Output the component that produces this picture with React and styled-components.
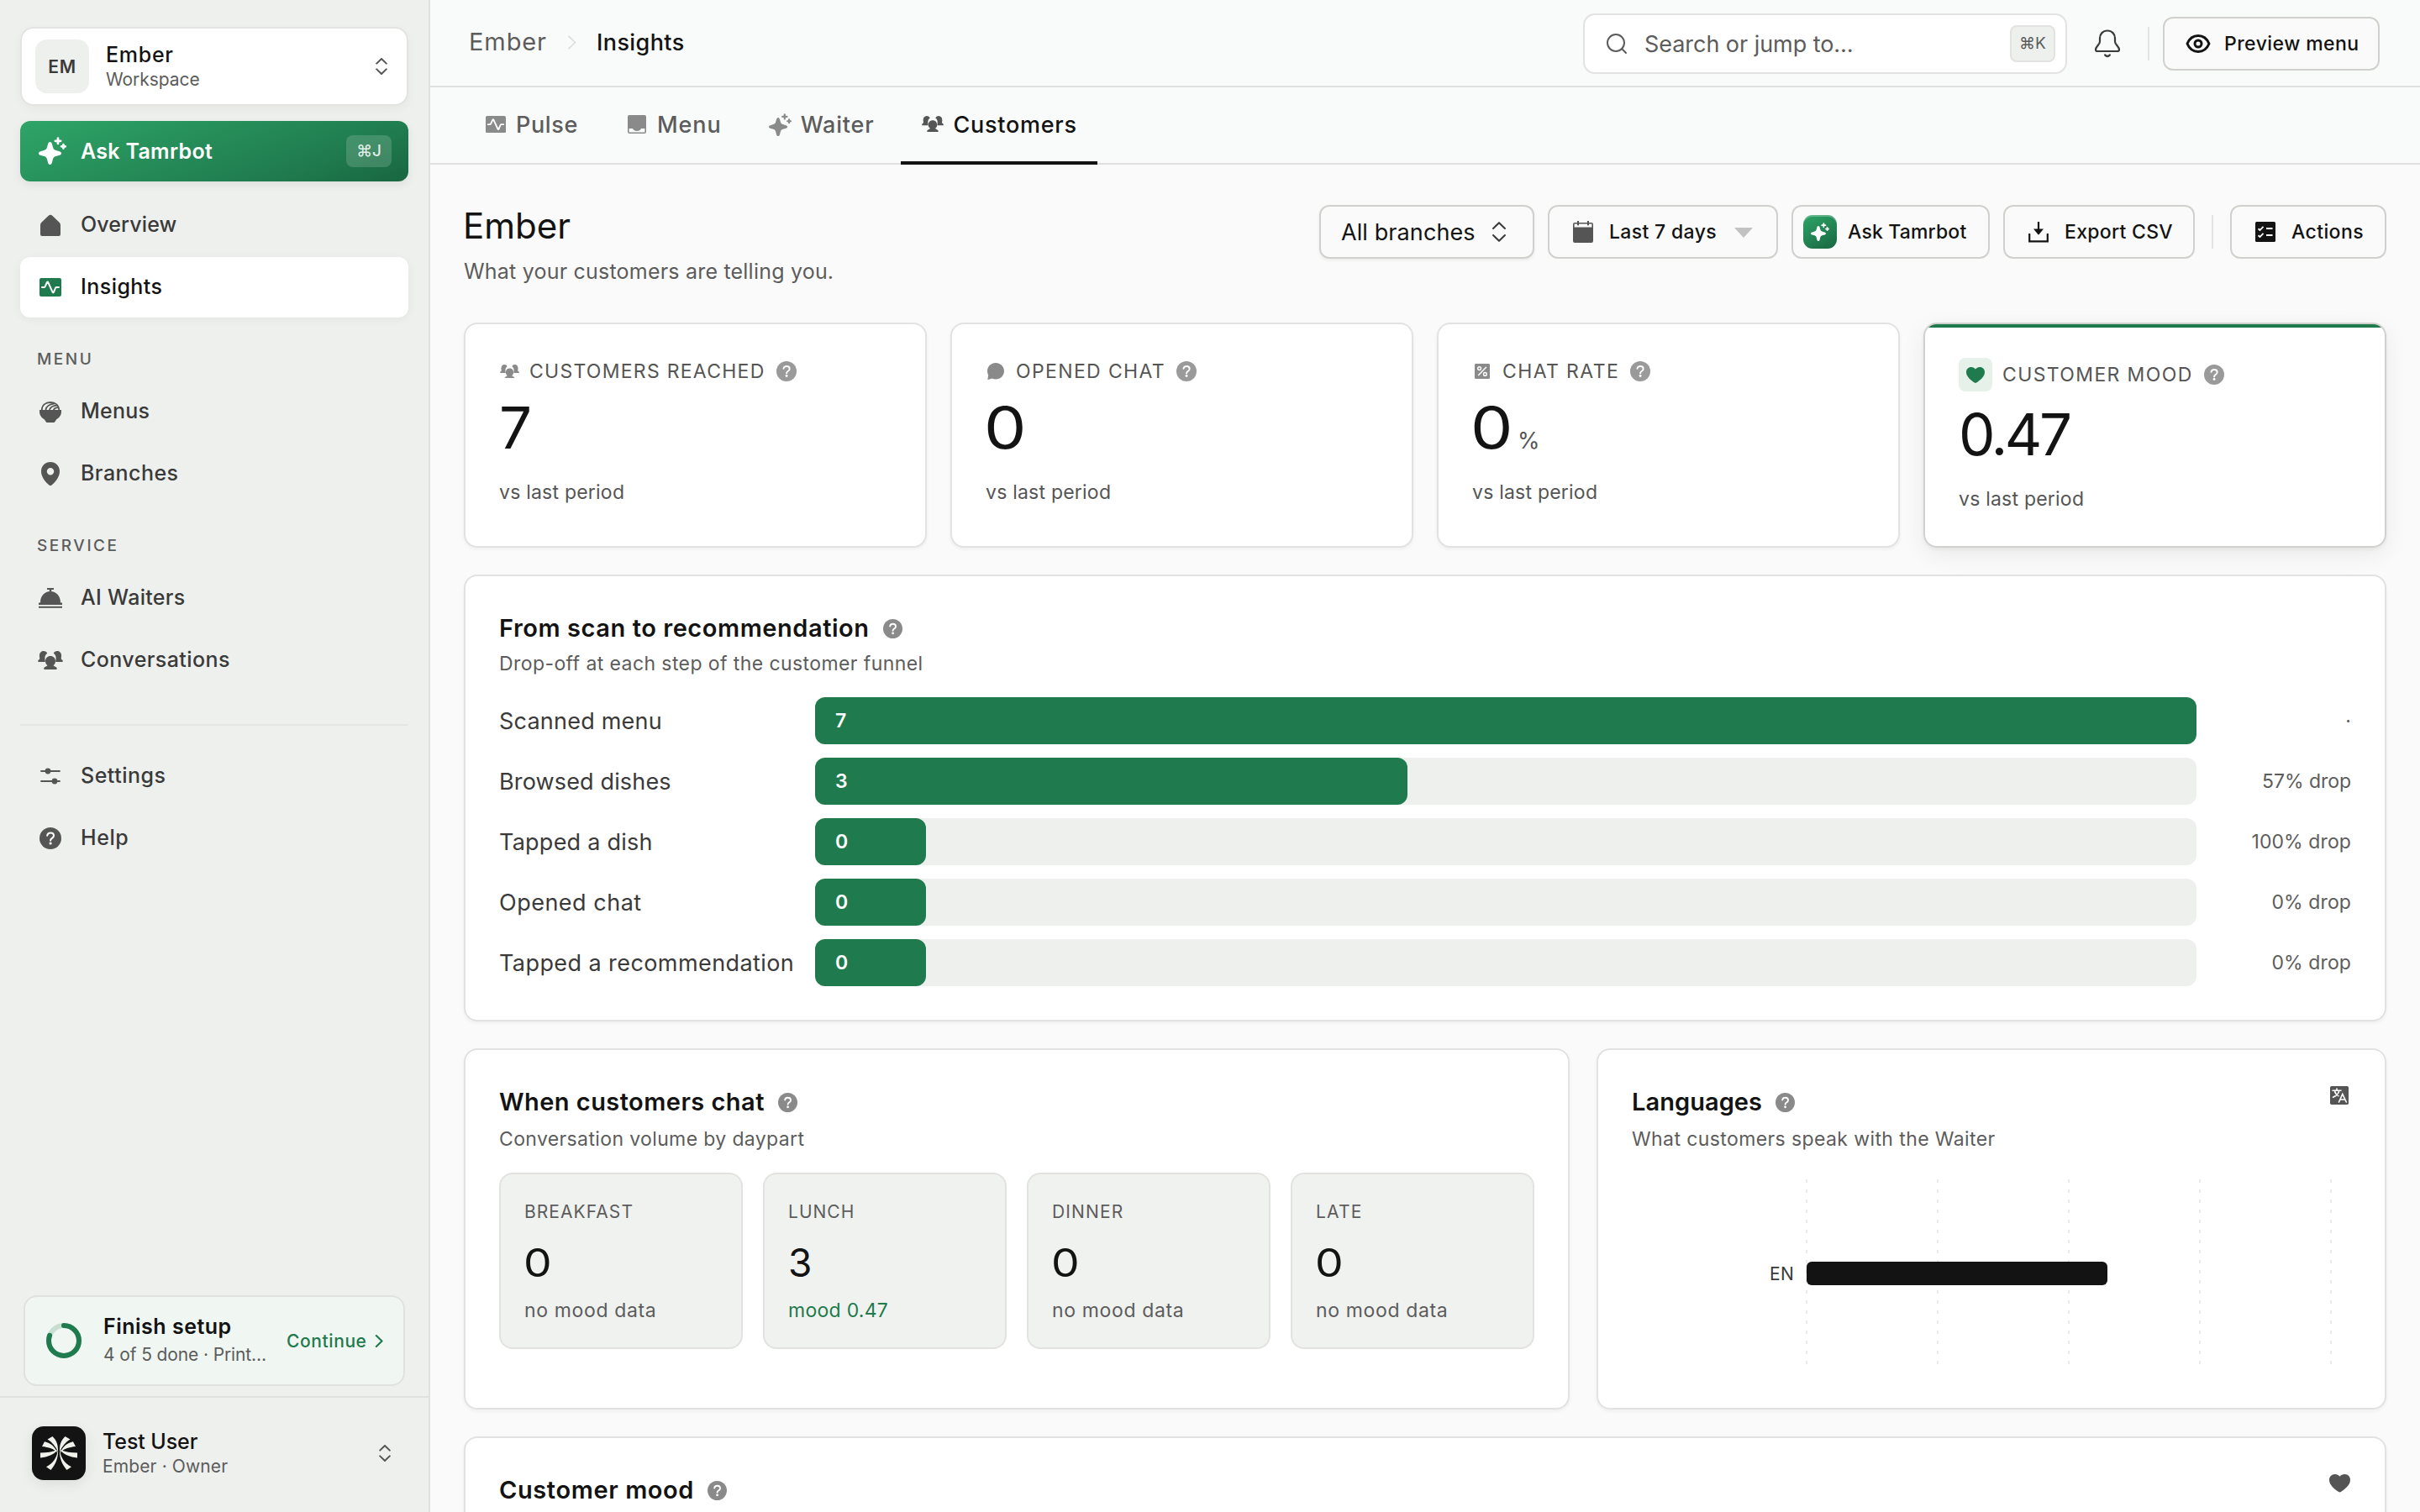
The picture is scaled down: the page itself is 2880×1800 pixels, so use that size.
import React from 'react'
import styled, { createGlobalStyle, css } from 'styled-components'

/* ---------- icons ---------- */

const Svg = ({ w, h, children, ...rest }) => (
  <svg width={w} height={h} viewBox={`0 0 ${w} ${h}`} fill="currentColor" {...rest}>{children}</svg>
)

const line = { fill: 'none', stroke: 'currentColor', strokeLinecap: 'round', strokeLinejoin: 'round' }

const SparkleIcon = ({ size = 33 }) => (
  <svg width={size} height={size} viewBox="0 0 33 33" fill="currentColor">
    <path d="M13.5 6C14.9 6 15.6 7 16.3 9.8C17.5 15 18 15.5 23.2 16.7C26 17.4 27 18.1 27 19.5C27 20.9 26 21.6 23.2 22.3C18 23.5 17.5 24 16.3 29.2C15.6 32 14.9 33 13.5 33C12.1 33 11.4 32 10.7 29.2C9.5 24 9 23.5 3.8 22.3C1 21.6 0 20.9 0 19.5C0 18.1 1 17.4 3.8 16.7C9 15.5 9.5 15 10.7 9.8C11.4 7 12.1 6 13.5 6Z" />
    <g {...line} strokeWidth="2.7">
      <path d="M23 1.6V8M19.8 4.8H26.2" />
      <path d="M29.4 9V13.6M27.1 11.3H31.7" />
    </g>
  </svg>
)
const HomeIcon = () => (
  <Svg w={24} h={26}>
    <path d="M0 13Q0 11 1.4 9.7L10 1.6Q12 0 14 1.6L22.6 9.7Q24 11 24 13V24Q24 26 22 26H2Q0 26 0 24Z" />
  </Svg>
)
const PulseIcon = ({ w = 26 }) => (
  <svg width={w} height={w * 22 / 26} viewBox="0 0 26 22" fill="currentColor">
    <rect width="26" height="22" rx="2" />
    <path d="M3 11H5.4Q6.2 11 6.6 10.2L9 5Q9.6 4 10.2 5L15.6 16.8Q16.3 18 16.9 16.8L19 11.8Q19.4 11 20.2 11H23" fill="none" stroke="#fff" strokeWidth="2" strokeLinecap="round" />
  </svg>
)
const BowlIcon = () => (
  <Svg w={26} h={25}>
    <path d="M0 10H26V12C26 17 22.5 20 20 21.4L18.4 24Q18 25 17 25H9Q8 25 7.6 24L6 21.4C3.5 20 0 17 0 12Z" />
    <g {...line} strokeWidth="1.8">
      <path d="M2.8 10C3 4.5 7 1 13 1S23 4.5 23.2 10" />
      <path d="M7.5 9.5C8 6 12 3 17 2.6M12 9.5C13 6.8 16 5 20.5 4.6M17 9.5C18 8 20 7.2 22 7.2" />
    </g>
  </Svg>
)
const PinIcon = () => (
  <Svg w={22} h={28}>
    <path fillRule="evenodd" d="M11 0C17 0 22 4.6 22 11C22 19 15.5 25 12.6 27.4Q11 28.6 9.4 27.4C6.5 25 0 19 0 11C0 4.6 5 0 11 0ZM11 7A4.2 4.2 0 1 0 11 15.4A4.2 4.2 0 1 0 11 7Z" />
  </Svg>
)
const ClocheIcon = () => (
  <Svg w={28} h={24}>
    <path d="M10 0H18V2H15.2V4H12.8V2H10Z" />
    <path d="M2 17.5C2 9.5 7 4 14 4S26 9.5 26 17.5H28V20H0V17.5Z" />
    <rect y="21.8" width="28" height="2" />
  </Svg>
)
const UsersIcon = ({ w = 30 }) => (
  <svg width={w} height={w * 22 / 30} viewBox="0 0 30 22" fill="currentColor">
    <path d="M6.8 0C9 0 10.6 1 11.2 2.8C9 4.4 8.3 6.5 8.4 9C8.5 10.5 8.8 11.5 8.8 13H.8C-.2 12.6 0 11.4 .9 10.8C2 10 2.4 9.6 2.3 8.4C1 4 3 0 6.8 0Z" />
    <path d="M23.2 0C21 0 19.4 1 18.8 2.8C21 4.4 21.7 6.5 21.6 9C21.5 10.5 21.2 11.5 21.2 13H29.2C30.2 12.6 30 11.4 29.1 10.8C28 10 27.6 9.6 27.7 8.4C29 4 27 0 23.2 0Z" />
    <path d="M15 6C18.6 6 21 8.6 21 12C21 14.5 20 16 18.6 17C19 18.5 22.5 18.6 22.8 21Q22.8 22 22 22H8Q7.2 22 7.2 21C7.5 18.6 11 18.5 11.4 17C10 16 9 14.5 9 12C9 8.6 11.4 6 15 6Z" />
  </svg>
)
const SlidersIcon = () => (
  <Svg w={24} h={20}>
    <path {...line} strokeWidth="1.8" d="M1 4H23M1 16H23" />
    <circle cx="9" cy="4" r="3.4" />
    <circle cx="17" cy="16" r="3.4" />
  </Svg>
)
const HelpIcon = ({ size = 26 }) => (
  <svg width={size} height={size} viewBox="0 0 26 26" fill="currentColor">
    <circle cx="13" cy="13" r="13" />
    <path d="M9.2 9.6C9.6 7.6 11 6.5 13.1 6.5C15.4 6.5 17 7.8 17 9.8C17 11.5 16 12.3 14.8 13C13.6 13.7 13.1 14.2 13.1 15.6" fill="none" stroke="#fff" strokeWidth="2.1" strokeLinecap="round" />
    <circle cx="13.1" cy="19" r="1.6" fill="#fff" />
  </svg>
)
const UpDownIcon = ({ w = 14, h = 20, sw = 2 }) => (
  <svg width={w} height={h} viewBox="0 0 14 20">
    <path {...line} strokeWidth={sw} d="M1.2 6.6L7 1L12.8 6.6M1.2 13.4L7 19L12.8 13.4" />
  </svg>
)
const ChevronIcon = ({ w = 9, h = 14, sw = 2 }) => (
  <svg width={w} height={h} viewBox="0 0 9 14">
    <path {...line} strokeWidth={sw} d="M1.5 1L7.8 7L1.5 13" />
  </svg>
)
const InboxIcon = () => (
  <Svg w={22} h={22}>
    <path fillRule="evenodd" d="M2 0H20Q22 0 22 2V20Q22 22 20 22H2Q0 22 0 20V2Q0 0 2 0ZM1.6 16V20.4H20.4V16H16Q14.8 19 11 19T6 16Z" />
  </Svg>
)
const SearchIcon = () => (
  <Svg w={26} h={26}>
    <circle {...line} cx="12" cy="12" r="10" strokeWidth="2" />
    <path {...line} strokeWidth="2" d="M19.3 19.3L24 24" />
  </Svg>
)
const BellIcon = () => (
  <Svg w={32} h={34}>
    <path {...line} strokeWidth="2.2" d="M16 1.5C10.5 1.5 7 5.5 7 10.5V14.5C7 18 2 20.5 2 24Q2 26 4 26H28Q30 26 30 24C30 20.5 25 18 25 14.5V10.5C25 5.5 21.5 1.5 16 1.5Z" />
    <path {...line} strokeWidth="2.4" d="M13.2 30.5Q16 33.5 18.8 30.5" />
  </Svg>
)
const EyeIcon = () => (
  <Svg w={30} h={24}>
    <path {...line} strokeWidth="3" d="M2 12C4.5 6 9 2.5 15 2.5S25.5 6 28 12C25.5 18 21 21.5 15 21.5S4.5 18 2 12Z" />
    <circle {...line} cx="15" cy="12" r="4" strokeWidth="3" />
  </Svg>
)
const CalendarIcon = () => (
  <Svg w={24} h={26}>
    <path fillRule="evenodd" d="M5 0H7V2H17V0H19V2H22Q24 2 24 4V24Q24 26 22 26H2Q0 26 0 24V4Q0 2 2 2H5ZM1.6 3.6V7.6H22.4V3.6H19V5.2H17V3.6H7V5.2H5V3.6Z" />
  </Svg>
)
const DownloadIcon = () => (
  <Svg w={24} h={26}>
    <path {...line} strokeWidth="2.2" strokeLinecap="butt" strokeLinejoin="miter" d="M1.2 15V24.4H22.8V15M12 1V12" />
    <path d="M6 9.5H18L12.7 16Q12 16.8 11.3 16Z" />
  </Svg>
)
const ChecklistIcon = () => (
  <Svg w={24} h={24}>
    <rect width="24" height="24" rx="1.5" />
    <path d="M3.5 8.3L5.5 10L9.5 5.8M3.5 16.3L5.5 18L9.5 13.8" fill="none" stroke="#fff" strokeWidth="1.8" />
    <path d="M13 8H20.5M13 16H20.5" stroke="#fff" strokeWidth="2.2" />
  </Svg>
)
const ChatIcon = () => (
  <Svg w={20} h={20}>
    <path d="M10 0C15.5 0 20 4.3 20 9.8S15.5 19.6 10 19.6C8.4 19.6 6.8 19.2 5.5 18.5L1 20Q.2 20.1 .4 19.2L1.2 14.8C.4 13.3 0 11.6 0 9.8C0 4.3 4.5 0 10 0Z" />
  </Svg>
)
const PercentIcon = () => (
  <Svg w={18} h={18}>
    <rect width="18" height="18" rx="1.2" />
    <path d="M4.2 14L13.8 4" stroke="#fff" strokeWidth="1.5" />
    <circle cx="5.6" cy="5.6" r="1.9" fill="none" stroke="#fff" strokeWidth="1.4" />
    <circle cx="12.4" cy="12.4" r="1.9" fill="none" stroke="#fff" strokeWidth="1.4" />
  </Svg>
)
const HeartIcon = ({ w = 22 }) => (
  <svg width={w} height={w * 19 / 22} viewBox="0 0 22 19" fill="currentColor">
    <path d="M11 2.4C12.2 .9 14 0 16 0C19.6 0 22 2.6 22 6C22 11.5 16.5 15.5 12.2 18.6Q11 19.4 9.8 18.6C5.5 15.5 0 11.5 0 6C0 2.6 2.4 0 6 0C8 0 9.8 .9 11 2.4Z" />
  </svg>
)
const TranslateIcon = () => (
  <Svg w={22} h={22}>
    <rect width="22" height="22" rx="1.8" />
    <g fill="none" stroke="#fff" strokeWidth="1.6" strokeLinecap="round">
      <path d="M3 5.2H13M8 3V5M10.8 5.5C10 9 7 11.8 3.5 13.2M5.3 5.5C6 8.5 8.5 10.8 10 11.6" />
      <path d="M10.5 19L14.8 9.5L19.3 19M12 16H17.8" />
    </g>
  </Svg>
)
const palmHalf = (
  <>
    <path d="M18.5 15.5L24.5 12C29.5 17 31.3 22 31 30C28 23.5 23.5 18.5 18.5 15.5Z" />
    <path d="M15 18.3L12 24C20 24.8 26.5 27 30.5 31.5C27.5 24.5 22.5 20 15 18.3Z" />
    <path d="M10 31.5V37.5C18.5 36.6 26.5 33.5 30.5 28C24.5 30.5 17.5 31.5 10 31.5Z" />
    <path d="M31 27C30 37 25.5 44 17 48.2L22.5 52C28.5 45 31.6 37 31 27Z" />
  </>
)
const PalmLogo = () => (
  <Svg w={64} h={64}>
    {palmHalf}
    <g transform="translate(64 0) scale(-1 1)">{palmHalf}</g>
  </Svg>
)
const ProgressRing = () => (
  <svg width="42" height="42" viewBox="0 0 42 42" fill="none" strokeWidth="6">
    <circle cx="21" cy="21" r="18" stroke="#c6dfd0" />
    <circle cx="21" cy="21" r="18" stroke="#1f7a4d" strokeLinecap="round" strokeDasharray="90.5 113.1" transform="rotate(-90 21 21)" />
  </svg>
)

/* ---------- data ---------- */

const mainNav = [
  { label: 'Overview', icon: <HomeIcon />, ls: 0.12 },
  { label: 'Insights', icon: <PulseIcon />, ls: 0.45, active: true },
]
const menuNav = [
  { label: 'Menus', icon: <BowlIcon />, ls: 0.2 },
  { label: 'Branches', icon: <PinIcon />, ls: 0.45 },
]
const serviceNav = [
  { label: 'AI Waiters', icon: <ClocheIcon />, ls: 0.3 },
  { label: 'Conversations', icon: <UsersIcon />, ls: 0.42 },
]
const footNav = [
  { label: 'Settings', icon: <SlidersIcon />, ls: 0.5 },
  { label: 'Help', icon: <HelpIcon />, ls: 0.54 },
]
const tabs = [
  { label: 'Pulse', icon: <PulseIcon w={24} />, ls: 0.65 },
  { label: 'Menu', icon: <InboxIcon />, ls: 0.9 },
  { label: 'Waiter', icon: <SparkleIcon size={27} />, ls: 0.8 },
  { label: 'Customers', icon: <UsersIcon w={26} />, ls: 0.75, active: true },
]
const stats = [
  { label: 'CUSTOMERS REACHED', icon: <UsersIcon w={23} />, value: '7', ls: 1.26 },
  { label: 'OPENED CHAT', icon: <ChatIcon />, value: '0', ls: 1.37 },
  { label: 'CHAT RATE', icon: <PercentIcon />, value: '0', unit: '%', ls: 1.4 },
  { label: 'CUSTOMER MOOD', icon: <HeartIcon />, value: '0.47', ls: 1.37, hero: true },
]
const funnel = [
  { label: 'Scanned menu', value: 7, pct: 100, drop: '·', ls: 0.22, dls: 0 },
  { label: 'Browsed dishes', value: 3, pct: 42.86, drop: '57% drop', ls: 0.15, dls: -0.05 },
  { label: 'Tapped a dish', value: 0, pct: 8, drop: '100% drop', ls: 0.24, dls: 0.1 },
  { label: 'Opened chat', value: 0, pct: 8, drop: '0% drop', ls: 0.5, dls: 0.1 },
  { label: 'Tapped a recommendation', value: 0, pct: 8, drop: '0% drop', ls: 0.42, dls: 0.1 },
]
const dayparts = [
  { label: 'BREAKFAST', value: '0', note: 'no mood data', ls: 1.06, nls: 0.64 },
  { label: 'LUNCH', value: '3', note: 'mood 0.47', ls: 1.01, nls: 0.27, good: true },
  { label: 'DINNER', value: '0', note: 'no mood data', ls: 1.12, nls: 0.64 },
  { label: 'LATE', value: '0', note: 'no mood data', ls: 1.22, nls: 0.64 },
]

const NavList = ({ items }) => (
  <Nav>
    {items.map(n => (
      <NavItem key={n.label} $active={n.active}>
        <NavIcon $active={n.active}>{n.icon}</NavIcon>
        <NavText $ls={n.ls}>{n.label}</NavText>
      </NavItem>
    ))}
  </Nav>
)

const CardHead = ({ title, ls, sub, subLs, gap, icon }) => (
  <Head>
    <div>
      <CardTitle $ls={ls}>{title}<Hint $title><HelpIcon size={23} /></Hint></CardTitle>
      {sub && <CardSub $ls={subLs} $gap={gap}>{sub}</CardSub>}
    </div>
    {icon && <HeadIcon>{icon}</HeadIcon>}
  </Head>
)

const App = () => {
  return (
    <>
      <GlobalStyle />
      <Shell>
        <SideBar>
          <Workspace>
            <Avatar>EM</Avatar>
            <Who>
              <WhoName $ls={0.72}>Ember</WhoName>
              <WhoSub $ls={-0.05}>Workspace</WhoSub>
            </Who>
            <UpDownIcon />
          </Workspace>
          <AskButton>
            <SparkleIcon />
            <AskText>Ask Tamrbot</AskText>
            <AskKey>⌘J</AskKey>
          </AskButton>
          <NavList items={mainNav} />
          <NavLabel $ls={2.5}>MENU</NavLabel>
          <NavList items={menuNav} />
          <NavLabel $ls={2.55}>SERVICE</NavLabel>
          <NavList items={serviceNav} />
          <NavRule />
          <NavList items={footNav} />

          <Setup>
            <ProgressRing />
            <SetupText>
              <SetupTitle>Finish setup</SetupTitle>
              <WhoSub $ls={-0.12}>4 of 5 done · Print…</WhoSub>
            </SetupText>
            <Continue>Continue <ChevronIcon w={10} h={15} /></Continue>
          </Setup>
          <UserBar>
            <UserLogo><PalmLogo /></UserLogo>
            <Who>
              <WhoName $ls={-0.08}>Test User</WhoName>
              <WhoSub $ls={0.12}>Ember · Owner</WhoSub>
            </Who>
            <UpDownIcon />
          </UserBar>
        </SideBar>

        <Main>
          <TopBar>
            <Crumbs>
              <CrumbRoot>Ember</CrumbRoot>
              <ChevronIcon w={11} h={17} sw={1.4} />
              <CrumbHere>Insights</CrumbHere>
            </Crumbs>
            <Search>
              <SearchIcon />
              <SearchText>Search or jump to…</SearchText>
              <SearchKey>⌘K</SearchKey>
            </Search>
            <BellButton><BellIcon /></BellButton>
            <VRule />
            <Button $w={258}>
              <ButtonIcon><EyeIcon /></ButtonIcon>
              <ButtonText $ls={0.45}>Preview menu</ButtonText>
            </Button>
          </TopBar>

          <Tabs>
            {tabs.map(t => (
              <Tab key={t.label} $active={t.active}>
                <TabIcon $active={t.active}>{t.icon}</TabIcon>
                <TabText $ls={t.ls}>{t.label}</TabText>
              </Tab>
            ))}
          </Tabs>

          <Page>
            <PageHead>
              <div>
                <PageTitle>Ember</PageTitle>
                <PageSub>What your customers are telling you.</PageSub>
              </div>
              <Tools>
                <Select>
                  <SelectText>All branches</SelectText>
                  <UpDownIcon w={18} h={24} sw={1.7} />
                </Select>
                <Button $w={274}>
                  <ButtonIcon $muted><CalendarIcon /></ButtonIcon>
                  <ButtonText $ls={0.34}>Last 7 days</ButtonText>
                  <Caret />
                </Button>
                <Button $w={236} $badge>
                  <AskBadge><SparkleIcon size={22} /></AskBadge>
                  <ButtonText $ls={0.16}>Ask Tamrbot</ButtonText>
                </Button>
                <Button $w={228}>
                  <ButtonIcon><DownloadIcon /></ButtonIcon>
                  <ButtonText $ls={0.28}>Export CSV</ButtonText>
                </Button>
                <VRule $tools />
                <Button $w={186}>
                  <ButtonIcon><ChecklistIcon /></ButtonIcon>
                  <ButtonText $ls={0.4}>Actions</ButtonText>
                </Button>
              </Tools>
            </PageHead>

            <Stats>
              {stats.map(s => (
                <Stat key={s.label} $hero={s.hero}>
                  <StatLabel>
                    <StatIcon $hero={s.hero}>{s.icon}</StatIcon>
                    <StatName $ls={s.ls}>{s.label}</StatName>
                    <Hint><HelpIcon size={24} /></Hint>
                  </StatLabel>
                  <StatValue>
                    <BigNumber $wide={s.value === '0'} $tight={s.hero}>{s.value}</BigNumber>
                    {s.unit && <Unit>{s.unit}</Unit>}
                  </StatValue>
                  <StatNote>vs last period</StatNote>
                </Stat>
              ))}
            </Stats>

            <Card $h={532}>
              <CardHead title="From scan to recommendation" ls={0.55} sub="Drop-off at each step of the customer funnel" subLs={0.41} gap={8} />
              <Funnel>
                {funnel.map(f => (
                  <FunnelRow key={f.label}>
                    <FunnelLabel $ls={f.ls}>{f.label}</FunnelLabel>
                    <Track>
                      <Fill style={{ width: `${f.pct}%` }}>{f.value}</Fill>
                    </Track>
                    <Drop $ls={f.dls}>{f.drop}</Drop>
                  </FunnelRow>
                ))}
              </Funnel>
            </Card>

            <Split>
              <Card $h={430}>
                <CardHead title="When customers chat" ls={0.45} sub="Conversation volume by daypart" subLs={0.37} gap={10} />
                <Dayparts>
                  {dayparts.map(d => (
                    <Daypart key={d.label}>
                      <DayLabel $ls={d.ls}>{d.label}</DayLabel>
                      <DayValue $wide={d.value === '0'}>{d.value}</DayValue>
                      <DayNote $ls={d.nls} $good={d.good}>{d.note}</DayNote>
                    </Daypart>
                  ))}
                </Dayparts>
              </Card>
              <Card $h={430}>
                <CardHead title="Languages" ls={0.05} sub="What customers speak with the Waiter" subLs={0.4} gap={10} icon={<TranslateIcon />} />
                <Chart width="856" height="240" viewBox="0 0 856 240">
                  {[208, 364, 520, 676, 832].map(x => (
                    <path key={x} d={`M${x} 8V228`} stroke="#ebebeb" strokeWidth="2" strokeDasharray="4 8" />
                  ))}
                  <rect x="208" y="106" width="358" height="28" rx="6" fill="#131313" />
                  <text x="193" y="128" textAnchor="end">EN</text>
                </Chart>
              </Card>
            </Split>

            <Card $h={430}>
              <CardHead title="Customer mood" ls={0.6} icon={<HeartIcon w={25} />} />
            </Card>
          </Page>
        </Main>
      </Shell>
    </>
  )
}

export default App

/* ---------- styles ---------- */

const GlobalStyle = createGlobalStyle`
  * {
    box-sizing: border-box;
  }
  body {
    margin: 0;
    background: #fafafa;
    color: #131313;
    font-family: Inter, "Liberation Sans", sans-serif;
  }
  svg {
    display: block;
    flex: none;
  }
`
const spaced = css`
  letter-spacing: ${p => p.$ls || 0}px;
  white-space: nowrap;
`
const Shell = styled.div`
  display: flex;
  width: 2880px;
  height: 1800px;
  overflow: hidden;
`
const SideBar = styled.aside`
  width: 512px;
  flex: none;
  display: flex;
  flex-direction: column;
  padding: 32px 24px 0;
  background: #eef0ed;
  border-right: 2px solid #e0e2df;
`
const Workspace = styled.div`
  height: 94px;
  flex: none;
  display: flex;
  align-items: center;
  padding: 0 23px 0 16px;
  border: 2px solid #e3e3e2;
  border-radius: 16px;
  background: #fff;
  color: #555;
  box-shadow: 0 4px 12px rgba(0, 0, 0, 0.04);
`
const Avatar = styled.div`
  width: 64px;
  height: 64px;
  border-radius: 14px;
  background: #eef0ed;
  color: #3a3a3a;
  font-size: 21px;
  font-weight: 600;
  letter-spacing: 0.8px;
  display: flex;
  justify-content: center;
  align-items: center;
`
const Who = styled.div`
  flex: 1;
  margin: -1px 0 0 20px;
`
const WhoName = styled.div`
  font-size: 25px;
  line-height: 32px;
  font-weight: 460;
  color: #131313;
  ${spaced}
`
const WhoSub = styled.div`
  font-size: 21px;
  line-height: 28px;
  color: #5c5c5c;
  ${spaced}
`
const AskButton = styled.div`
  height: 72px;
  flex: none;
  margin: 18px 0 16px;
  display: flex;
  align-items: center;
  padding: 0 20px 1px 22px;
  border-radius: 12px;
  background: linear-gradient(160deg, #2ea568 0%, #1f7a4d 75%, #186640 100%);
  color: #fff;
  box-shadow: 0 4px 12px rgba(0, 0, 0, 0.07);
`
const AskText = styled.div`
  flex: 1;
  margin-left: 17px;
  font-size: 25px;
  font-weight: 580;
  letter-spacing: 0.3px;
`
const AskKey = styled.div`
  width: 54px;
  height: 38px;
  border-radius: 8px;
  background: rgba(255, 255, 255, 0.16);
  color: rgba(255, 255, 255, 0.85);
  font-size: 19px;
  font-weight: 500;
  display: flex;
  justify-content: center;
  align-items: center;
`
const Nav = styled.nav`
  display: flex;
  flex-direction: column;
  gap: 2px;
`
const NavItem = styled.div`
  height: 72px;
  display: flex;
  align-items: center;
  padding: 0 20px;
  border-radius: 12px;
  color: #3a3a3a;
  ${p => p.$active && css`
    background: #fff;
    color: #131313;
    box-shadow: 0 2px 12px rgba(0, 0, 0, 0.05);
  `}
`
const NavIcon = styled.div`
  width: 32px;
  margin-right: 20px;
  display: flex;
  justify-content: center;
  color: ${p => p.$active ? '#1f7a4d' : '#555'};
`
const NavText = styled.div`
  margin-top: -3px;
  font-size: 25px;
  font-weight: 460;
  line-height: 32px;
  ${spaced}
`
const NavLabel = styled.div`
  margin: 38px 0 14px 20px;
  font-size: 19px;
  line-height: 24px;
  font-weight: 460;
  color: #5c5c5c;
  ${spaced}
`
const NavRule = styled.div`
  height: 2px;
  flex: none;
  margin: 40px 0 24px;
  background: #e4e6e3;
`
const Setup = styled.div`
  height: 108px;
  flex: none;
  margin: auto 4px 12px;
  display: flex;
  align-items: center;
  padding: 0 24px 0 25px;
  border: 2px solid #e0e2df;
  border-radius: 16px;
  background: #f0f6f2;
`
const SetupText = styled.div`
  width: 218px;
  margin: -2px 0 0 26px;
`
const SetupTitle = styled.div`
  margin-bottom: 4px;
  font-size: 25px;
  line-height: 32px;
  font-weight: 580;
  letter-spacing: 0.5px;
`
const Continue = styled.div`
  flex: 1;
  display: flex;
  align-items: center;
  justify-content: space-between;
  font-size: 21px;
  font-weight: 460;
  letter-spacing: 0.6px;
  color: #1f7a4d;
`
const UserBar = styled.div`
  height: 138px;
  flex: none;
  margin: 0 -24px;
  display: flex;
  align-items: center;
  padding: 0 45px 4px 38px;
  border-top: 2px solid #e0e2df;
  color: #555;
`
const UserLogo = styled.div`
  width: 64px;
  height: 64px;
  border-radius: 14px;
  background: #131313;
  color: #f1f1ec;
  box-shadow: 0 4px 16px rgba(0, 0, 0, 0.08);
`

const Main = styled.main`
  width: 2368px;
`
const TopBar = styled.header`
  height: 104px;
  display: flex;
  align-items: center;
  padding: 2px 48px 0 46px;
  border-bottom: 2px solid #e0e1e0;
  background: #f9fbfa;
`
const Crumbs = styled.div`
  flex: 1;
  display: flex;
  align-items: center;
  padding-bottom: 4px;
  color: #dcdcdc;
`
const CrumbRoot = styled.div`
  width: 117px;
  margin-top: -1px;
  font-size: 29px;
  letter-spacing: 0.9px;
  color: #5c5c5c;
`
const CrumbHere = styled.div`
  margin-left: 24px;
  font-size: 27px;
  font-weight: 460;
  letter-spacing: 0.4px;
  color: #131313;
`
const Search = styled.div`
  width: 576px;
  height: 72px;
  display: flex;
  align-items: center;
  padding: 0 12px 0 25px;
  border: 2px solid #e2e2e1;
  border-radius: 14px;
  background: #fff;
  color: #5c5c5c;
`
const SearchText = styled.div`
  flex: 1;
  margin-left: 20px;
  font-size: 27px;
  letter-spacing: -0.05px;
`
const SearchKey = styled.div`
  width: 54px;
  height: 44px;
  border: 2px solid #e2e2e0;
  border-radius: 8px;
  background: #eef0ed;
  font-size: 19px;
  display: flex;
  justify-content: center;
  align-items: center;
  padding-bottom: 2px;
`
const BellButton = styled.div`
  width: 64px;
  height: 64px;
  margin: 0 16px;
  display: flex;
  justify-content: center;
  align-items: center;
  color: #3a3a3a;
`
const VRule = styled.div`
  width: 2px;
  height: 40px;
  margin: ${p => p.$tools ? '0 4px' : '0 16px 0 0'};
  background: #e2e2e1;
`
const Button = styled.div`
  width: ${p => p.$w}px;
  height: 64px;
  display: flex;
  align-items: center;
  padding-left: ${p => p.$badge ? 12 : 24}px;
  border: 2px solid #d0d1cd;
  border-radius: 12px;
  background: #fafafa;
  color: #131313;
`
const ButtonIcon = styled.div`
  width: 32px;
  margin-right: 15px;
  display: flex;
  justify-content: center;
  color: ${p => p.$muted ? '#555' : '#131313'};
`
const ButtonText = styled.div`
  font-size: 23px;
  font-weight: 460;
  ${spaced}
`
const Caret = styled.div`
  margin: 2px 0 0 21px;
  border-left: 11px solid transparent;
  border-right: 11px solid transparent;
  border-top: 12px solid #c2c2c2;
`
const AskBadge = styled.div`
  width: 40px;
  height: 40px;
  margin-right: 13px;
  border-radius: 11px;
  background: linear-gradient(150deg, #2ea568, #186640);
  box-shadow: inset 0 2px 0 rgba(255, 255, 255, 0.25);
  color: #fff;
  display: flex;
  justify-content: center;
  align-items: center;
`

const Tabs = styled.div`
  height: 92px;
  display: flex;
  gap: 8px;
  padding-left: 40px;
  border-bottom: 2px solid #e0e1e0;
  background: #f9fbfa;
`
const Tab = styled.div`
  height: 92px;
  display: flex;
  align-items: center;
  padding: 0 24px;
  border-bottom: 4px solid ${p => p.$active ? '#131313' : 'transparent'};
  color: ${p => p.$active ? '#131313' : '#5c5c5c'};
`
const TabIcon = styled.div`
  width: 28px;
  margin-right: 10px;
  display: flex;
  justify-content: center;
  color: ${p => p.$active ? '#555' : '#8a8a8a'};
`
const TabText = styled.div`
  font-size: 27px;
  font-weight: 460;
  ${spaced}
`

const Page = styled.div`
  padding: 48px 40px 0;
  display: flex;
  flex-direction: column;
  gap: 32px;
`
const PageHead = styled.div`
  height: 108px;
  display: flex;
  justify-content: space-between;
  align-items: flex-start;
`
const PageTitle = styled.div`
  margin: -1px 0 0 -1px;
  font-size: 42px;
  line-height: 52px;
  letter-spacing: 0.03px;
`
const PageSub = styled.div`
  margin-top: 12px;
  font-size: 25px;
  line-height: 32px;
  letter-spacing: 0.21px;
  color: #5c5c5c;
`
const Tools = styled.div`
  display: flex;
  align-items: center;
  gap: 16px;
`
const Select = styled.div`
  width: 256px;
  height: 64px;
  display: flex;
  align-items: center;
  justify-content: space-between;
  padding: 0 31px 0 24px;
  border: 2px solid #d0d1cd;
  border-radius: 12px;
  background: #fafafa;
  box-shadow: 0 2px 4px rgba(0, 0, 0, 0.06);
  color: #3a3a3a;
`
const SelectText = styled.div`
  font-size: 27px;
  letter-spacing: 0.1px;
  color: #131313;
`

const Stats = styled.div`
  display: grid;
  grid-template-columns: repeat(4, 1fr);
  gap: 28px;
`
const Stat = styled.div`
  height: 268px;
  padding: 40px;
  border: 2px solid #e2e2e2;
  border-radius: 16px;
  background: #fff;
  box-shadow: 0 2px 4px rgba(0, 0, 0, 0.05);
  ${p => p.$hero && css`
    border-color: #d0d1cd;
    background: linear-gradient(#1f7a4d 4px, #fff 4px);
    box-shadow: 0 2px 4px rgba(0, 0, 0, 0.05), 0 8px 28px rgba(0, 0, 0, 0.07);
  `}
`
const StatLabel = styled.div`
  display: flex;
  align-items: center;
`
const StatIcon = styled.div`
  width: 24px;
  margin-right: 12px;
  display: flex;
  justify-content: center;
  align-items: center;
  color: #8a8a8a;
  ${p => p.$hero && css`
    width: 40px;
    height: 40px;
    border-radius: 8px;
    background: #e6f1ea;
    color: #1f7a4d;
  `}
`
const StatName = styled.div`
  font-size: 23px;
  line-height: 32px;
  color: #555;
  ${spaced}
`
const Hint = styled.span`
  margin-left: ${p => p.$title ? 16 : 13}px;
  color: ${p => p.$title ? '#8a8a8a' : '#9a9a9a'};
`
const StatValue = styled.div`
  margin-top: 9px;
  display: flex;
  align-items: baseline;
`
const BigNumber = styled.div`
  font-size: 69px;
  line-height: 84px;
  letter-spacing: ${p => p.$tight ? '-3.4px' : 0};
  ${p => p.$wide && css`
    width: 50px;
    margin-left: -2px;
    transform: scaleX(1.16);
    transform-origin: left;
  `}
`
const Unit = styled.div`
  margin-left: 6px;
  font-size: 27px;
  color: #555;
`
const StatNote = styled.div`
  margin-top: 19px;
  font-size: 23px;
  line-height: 32px;
  letter-spacing: 0.22px;
  color: #555;
`

const Card = styled.section`
  height: ${p => p.$h}px;
  padding: 44px 40px 0;
  border: 2px solid #e2e2e2;
  border-radius: 16px;
  background: #fff;
  box-shadow: 0 2px 4px rgba(0, 0, 0, 0.05);
`
const Head = styled.div`
  display: flex;
  justify-content: space-between;
  align-items: flex-start;
  margin-bottom: 24px;
`
const HeadIcon = styled.div`
  width: 28px;
  height: 28px;
  margin-top: -4px;
  display: flex;
  justify-content: center;
  align-items: center;
  color: #555;
`
const CardTitle = styled.div`
  display: flex;
  align-items: center;
  font-size: 29px;
  line-height: 36px;
  font-weight: 580;
  ${spaced}
`
const CardSub = styled.div`
  margin-top: ${p => p.$gap}px;
  font-size: 23px;
  line-height: 32px;
  color: #5c5c5c;
  ${spaced}
`
const Funnel = styled.div`
  display: flex;
  flex-direction: column;
  gap: 16px;
`
const FunnelRow = styled.div`
  display: grid;
  grid-template-columns: 376px 1644px 1fr;
  align-items: center;
`
const FunnelLabel = styled.div`
  font-size: 27px;
  color: #3a3a3a;
  ${spaced}
`
const Track = styled.div`
  height: 56px;
  border-radius: 12px;
  background: #eef0ed;
`
const Fill = styled.div`
  height: 56px;
  display: flex;
  align-items: center;
  padding-left: 24px;
  border-radius: 12px;
  background: #1f7a4d;
  color: #fff;
  font-size: 23px;
  font-weight: 600;
`
const Drop = styled.div`
  text-align: right;
  font-size: 23px;
  color: #5c5c5c;
  ${spaced}
`
const Split = styled.div`
  display: grid;
  grid-template-columns: 1316px 940px;
  gap: 32px;
`
const Dayparts = styled.div`
  display: grid;
  grid-template-columns: repeat(4, 1fr);
  gap: 24px;
`
const Daypart = styled.div`
  height: 210px;
  padding: 31px 20px 0 28px;
  border: 2px solid #e2e3e0;
  border-radius: 16px;
  background: #f0f2ef;
`
const DayLabel = styled.div`
  font-size: 21px;
  line-height: 28px;
  color: #5c5c5c;
  ${spaced}
`
const DayValue = styled.div`
  margin-top: 18px;
  font-size: 46px;
  line-height: 56px;
  ${p => p.$wide && css`
    margin-left: -1px;
    transform: scaleX(1.16);
    transform-origin: left;
  `}
`
const DayNote = styled.div`
  margin-top: 13px;
  font-size: 23px;
  line-height: 32px;
  color: ${p => p.$good ? '#1f7a4d' : '#5c5c5c'};
  ${spaced}
`
const Chart = styled.svg`
  text {
    font-size: 21px;
    fill: #3a3a3a;
    letter-spacing: 0.3px;
  }
`
